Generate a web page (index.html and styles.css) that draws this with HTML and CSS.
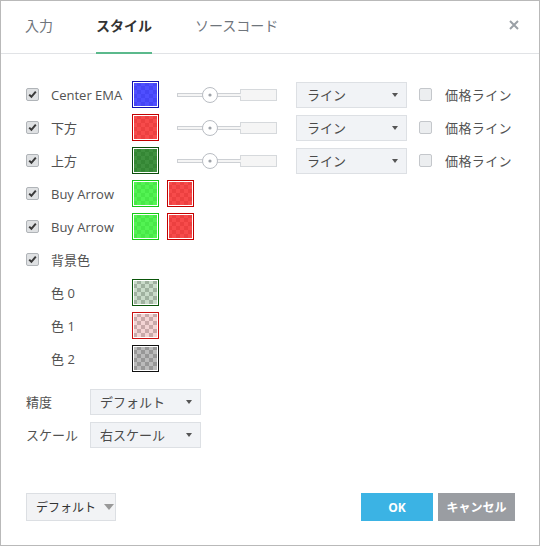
FILE: index.html
```html
<!DOCTYPE html>
<html lang="ja">
<head>
<meta charset="utf-8">
<link rel="stylesheet" href="styles.css">
</head>
<body>
<div class="dialog">
  <div class="header">
    <div class="tab">入力</div>
    <div class="tab active">スタイル</div>
    <div class="tab">ソースコード</div>
    <div class="close"><svg width="10" height="10" viewBox="0 0 10 10"><path d="M1 1L9 9M9 1L1 9" stroke="#9aa0a6" stroke-width="2"/></svg></div>
  </div>
  <div class="content">
    <div class="row">
      <span class="cb checked"></span><span class="label">Center EMA</span>
      <span class="sw sw-blue"></span>
      <svg class="slider" width="100" height="20" viewBox="0 0 100 20"><rect x="0.5" y="8.5" width="64" height="3" fill="#f5f5f5" stroke="#cdd0d4"/><rect x="63.5" y="4.5" width="36" height="11" fill="#f5f5f5" stroke="#d6d9dc"/><rect x="63" y="9" width="2" height="2" fill="#f5f5f5"/><circle cx="33" cy="10" r="7.5" fill="#fff" stroke="#b9bdc3"/><circle cx="33" cy="10" r="1.6" fill="#9ea2a8"/></svg>
      <div class="select sel-line"><span>ライン</span><i class="arr"></i></div>
      <span class="cb"></span><span class="plabel">価格ライン</span>
    </div>
    <div class="row">
      <span class="cb checked"></span><span class="label">下方</span>
      <span class="sw sw-red"></span>
      <svg class="slider" width="100" height="20" viewBox="0 0 100 20"><rect x="0.5" y="8.5" width="64" height="3" fill="#f5f5f5" stroke="#cdd0d4"/><rect x="63.5" y="4.5" width="36" height="11" fill="#f5f5f5" stroke="#d6d9dc"/><rect x="63" y="9" width="2" height="2" fill="#f5f5f5"/><circle cx="33" cy="10" r="7.5" fill="#fff" stroke="#b9bdc3"/><circle cx="33" cy="10" r="1.6" fill="#9ea2a8"/></svg>
      <div class="select sel-line"><span>ライン</span><i class="arr"></i></div>
      <span class="cb"></span><span class="plabel">価格ライン</span>
    </div>
    <div class="row">
      <span class="cb checked"></span><span class="label">上方</span>
      <span class="sw sw-dgreen"></span>
      <svg class="slider" width="100" height="20" viewBox="0 0 100 20"><rect x="0.5" y="8.5" width="64" height="3" fill="#f5f5f5" stroke="#cdd0d4"/><rect x="63.5" y="4.5" width="36" height="11" fill="#f5f5f5" stroke="#d6d9dc"/><rect x="63" y="9" width="2" height="2" fill="#f5f5f5"/><circle cx="33" cy="10" r="7.5" fill="#fff" stroke="#b9bdc3"/><circle cx="33" cy="10" r="1.6" fill="#9ea2a8"/></svg>
      <div class="select sel-line"><span>ライン</span><i class="arr"></i></div>
      <span class="cb"></span><span class="plabel">価格ライン</span>
    </div>
    <div class="row">
      <span class="cb checked"></span><span class="label">Buy Arrow</span>
      <span class="sw sw-green"></span><span class="sw sw-red sw2"></span>
    </div>
    <div class="row">
      <span class="cb checked"></span><span class="label">Buy Arrow</span>
      <span class="sw sw-green"></span><span class="sw sw-red sw2"></span>
    </div>
    <div class="row">
      <span class="cb checked"></span><span class="label">背景色</span>
    </div>
    <div class="row indent">
      <span class="label">色 0</span><span class="sw sw-c0"></span>
    </div>
    <div class="row indent">
      <span class="label">色 1</span><span class="sw sw-c1"></span>
    </div>
    <div class="row indent">
      <span class="label">色 2</span><span class="sw sw-c2"></span>
    </div>
    <div class="props">
      <div class="row">
        <span class="plbl">精度</span>
        <div class="select sel-small"><span>デフォルト</span><i class="arr"></i></div>
      </div>
      <div class="row">
        <span class="plbl">スケール</span>
        <div class="select sel-small"><span>右スケール</span><i class="arr"></i></div>
      </div>
    </div>
  </div>
  <div class="footer">
    <div class="defbtn"><span>デフォルト</span><i class="arr2"></i></div>
    <div class="spacer"></div>
    <div class="btn ok">OK</div>
    <div class="btn cancel">キャンセル</div>
  </div>
</div>
</body>
</html>
```
FILE: styles.css
```css
* { box-sizing: border-box; }
html, body { margin: 0; padding: 0; background: #fff; }
body {
  font-family: "Open Sans", "Noto Sans CJK JP", sans-serif;
  font-size: 13px;
  color: #525252;
}
.dialog {
  width: 540px;
  height: 546px;
  border: 1px solid #b9b9b9;
  position: relative;
  display: flex;
  flex-direction: column;
}
.header {
  height: 53px;
  border-bottom: 1px solid #e1e3e6;
  display: flex;
  align-items: stretch;
  padding-left: 24px;
  position: relative;
}
.tab {
  font-size: 14px;
  color: #6f757c;
  margin-right: 43px;
  display: flex;
  align-items: center;
  padding-bottom: 3px;
  border-bottom: 2px solid transparent;
  margin-bottom: -1px;
}
.tab.active {
  color: #333;
  font-weight: bold;
  border-bottom-color: #5bb98c;
}
.close {
  position: absolute;
  right: 20px;
  top: 19px;
  width: 10px;
  height: 10px;
  line-height: 0;
}
.content {
  padding: 24px 0 0 25px;
}
.row {
  height: 33px;
  display: flex;
  align-items: center;
}
.cb {
  width: 13px;
  height: 13px;
  border: 1px solid #c4c7cb;
  border-radius: 2px;
  background: #eceef0;
  flex: none;
  margin-right: 12px;
  position: relative;
}
.cb.checked {
  background: #dfe1e3 url("data:image/svg+xml;utf8,<svg xmlns='http://www.w3.org/2000/svg' width='11' height='11' viewBox='0 0 11 11'><path d='M2.2 5.6L4.4 7.8L8.8 2.6' fill='none' stroke='%233a3a3a' stroke-width='2'/></svg>") center/11px 11px no-repeat;
  border-color: #b0b4b8;
}
.label {
  width: 81px;
  flex: none;
  white-space: nowrap;
}
.indent { padding-left: 25px; }
.sw {
  width: 27px;
  height: 27px;
  flex: none;
  border: 1px solid;
  box-shadow: inset 0 0 0 1px #fff;
  background-color: #fff;
  background-image: var(--c), conic-gradient(#c8c8c8 25%, #fff 0 50%, #c8c8c8 0 75%, #fff 0);
  background-size: 100% 100%, 8px 8px;
  background-origin: padding-box;
  background-clip: padding-box;
  padding: 1px;
}
.sw2 { margin-left: 8px; }
.sw-blue { border-color: #1010b0; --c: linear-gradient(rgba(40,40,255,0.82), rgba(40,40,255,0.82)); }
.sw-red { border-color: #c40000; --c: linear-gradient(rgba(245,30,30,0.8), rgba(245,30,30,0.8)); }
.sw-dgreen { border-color: #0b4d0b; --c: linear-gradient(rgba(20,120,20,0.82), rgba(20,120,20,0.82)); }
.sw-green { border-color: #14c814; --c: linear-gradient(rgba(40,240,40,0.8), rgba(40,240,40,0.8)); }
.sw-c0 { border-color: #0a550a; --c: linear-gradient(rgba(40,110,40,0.25), rgba(40,110,40,0.25)); }
.sw-c1 { border-color: #c81010; --c: linear-gradient(rgba(200,60,60,0.22), rgba(200,60,60,0.22)); }
.sw-c2 { border-color: #111; --c: linear-gradient(rgba(60,60,60,0.35), rgba(60,60,60,0.35)); }
.slider { margin-left: 18px; flex: none; }
.select {
  height: 26px;
  background: #f1f3f6;
  border: 1px solid #dde0e4;
  display: flex;
  align-items: center;
  padding-left: 10px;
  padding-right: 4px;
  flex: none;
  color: #4a4a4a;
}
.select span { flex: 1; white-space: nowrap; }
.sel-line { width: 111px; margin-left: 19px; margin-right: 12px; }
.arr {
  width: 0; height: 0;
  border-left: 3.5px solid transparent;
  border-right: 3.5px solid transparent;
  border-top: 4px solid #555;
  margin-right: 4px;
}
.plabel { margin-left: 1px; white-space: nowrap; letter-spacing: 0.4px; }
.props { margin-top: 10px; }
.plbl { width: 64px; flex: none; white-space: nowrap; }
.sel-small { width: 111px; padding-left: 9px; }
.footer {
  display: flex;
  align-items: center;
  padding: 0 24px 0 25px;
  margin-top: 42px;
}
.defbtn {
  width: 90px;
  height: 28px;
  background: #f2f3f5;
  border: 1px solid #dcdfe3;
  display: flex;
  align-items: center;
  padding-left: 9px;
  font-size: 12px;
  color: #333;
}
.defbtn span { margin-right: 8px; }
.arr2 {
  width: 0; height: 0;
  border-left: 5px solid transparent;
  border-right: 5px solid transparent;
  border-top: 6px solid #999;
}
.spacer { flex: 1; }
.btn {
  height: 28px;
  color: #fff;
  font-weight: bold;
  font-size: 12px;
  display: flex;
  align-items: center;
  justify-content: center;
}
.ok { width: 72px; background: #3bb3e4; margin-right: 5px; }
.cancel { width: 77px; background: #9a9da2; }
```
